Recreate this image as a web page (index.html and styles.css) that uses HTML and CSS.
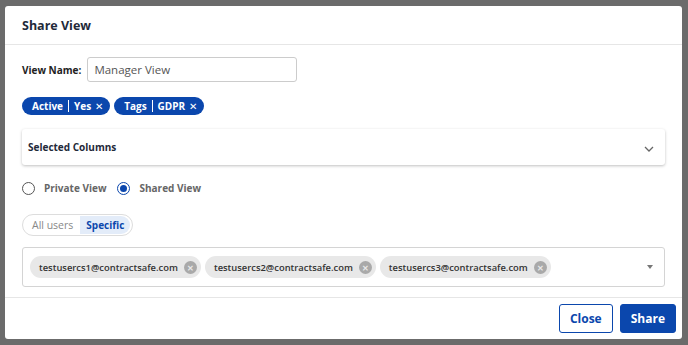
FILE: index.html
```html
<!DOCTYPE html>
<html lang="en">
<head>
    <meta charset="UTF-8">
    <meta name="viewport" content="width=device-width, initial-scale=1.0">
    <title>Share View</title>
    <link rel="stylesheet" href="styles.css">
</head>
<body>
    <div class="modal">
        <div class="modal-header">
            <h2>Share View</h2>
        </div>
        <div class="modal-body">
            <div class="name-row">
                <label for="viewName">View Name:</label>
                <input type="text" id="viewName" value="Manager View">
            </div>

            <div class="filters">
                <span class="filter">Active<i class="sep"></i>Yes<span class="x">&#x2715;</span></span>
                <span class="filter">Tags<i class="sep"></i>GDPR<span class="x">&#x2715;</span></span>
            </div>

            <div class="columns-card">
                <span>Selected Columns</span>
                <svg class="chevron" width="10" height="6" viewBox="0 0 10 6"><path d="M1 1l4 4 4-4" fill="none" stroke="#666" stroke-width="1.3"/></svg>
            </div>

            <div class="radios">
                <label class="radio"><span class="dot"></span>Private View</label>
                <label class="radio checked"><span class="dot"></span>Shared View</label>
            </div>

            <div class="segment">
                <span class="seg">All users</span>
                <span class="seg active">Specific</span>
            </div>

            <div class="users">
                <div class="chips">
                    <span class="chip">testusercs1@contractsafe.com<span class="chip-x">&#x2715;</span></span>
                    <span class="chip">testusercs2@contractsafe.com<span class="chip-x">&#x2715;</span></span>
                    <span class="chip">testusercs3@contractsafe.com<span class="chip-x">&#x2715;</span></span>
                </div>
                <span class="caret"></span>
            </div>
        </div>
        <div class="modal-footer">
            <button class="btn btn-outline">Close</button>
            <button class="btn btn-primary">Share</button>
        </div>
    </div>
</body>
</html>
```

FILE: styles.css
```css
* {
    box-sizing: border-box;
}
body {
    margin: 0;
    padding: 6px 6px 0 5px;
    background-color: #6b6b6b;
    font-family: "Open Sans", "Noto Sans", sans-serif;
    height: 345px;
    overflow: hidden;
}
.modal {
    width: 677px;
    height: 333px;
    background-color: #fff;
    border-radius: 3px;
    display: flex;
    flex-direction: column;
}
.modal-header {
    height: 39px;
    border-bottom: 1px solid #e6e6e6;
    padding: 0 17px;
    display: flex;
    align-items: center;
}
.modal-header h2 {
    margin: 0;
    font-size: 12.5px;
    font-weight: 700;
    color: #1f2a3a;
}
.modal-body {
    padding: 12px 17px 0 17px;
    flex: 1;
    border-bottom: 1px solid #e6e6e6;
}
.name-row {
    display: flex;
    align-items: center;
    height: 25px;
}
.name-row label {
    font-size: 10px;
    font-weight: 700;
    color: #222;
    margin-right: 6px;
}
.name-row input {
    width: 210px;
    height: 25px;
    border: 1px solid #ccc;
    border-radius: 3px;
    padding: 0 6px;
    font-family: inherit;
    font-size: 11.5px;
    color: #555;
    outline: none;
}
.filters {
    display: flex;
    gap: 4px;
    margin-top: 15px;
}
.filter {
    display: flex;
    align-items: center;
    height: 18px;
    padding: 0 7px 0 10px;
    border-radius: 9px;
    background-color: #0b47ad;
    color: #fff;
    font-size: 10px;
    font-weight: 700;
}
.sep {
    width: 1px;
    height: 12px;
    background-color: #fff;
    margin: 0 5px;
}
.x {
    font-size: 10px;
    font-weight: 400;
    margin-left: 4px;
}
.columns-card {
    margin-top: 14px;
    height: 36px;
    border-radius: 3px;
    box-shadow: 0 1px 3px rgba(0, 0, 0, 0.25);
    display: flex;
    align-items: center;
    justify-content: space-between;
    padding: 0 11px 0 6px;
    font-size: 10px;
    font-weight: 700;
    color: #1f2a3a;
}
.chevron {
    margin-top: 3px;
}
.radios {
    display: flex;
    gap: 11px;
    margin-top: 15px;
    height: 16px;
    align-items: center;
}
.radio {
    display: flex;
    align-items: center;
    font-size: 10px;
    font-weight: 700;
    color: #666;
}
.dot {
    width: 13px;
    height: 13px;
    border: 1.5px solid #555;
    border-radius: 50%;
    margin-right: 9px;
    display: flex;
    align-items: center;
    justify-content: center;
}
.checked .dot {
    border-color: #0b47ad;
}
.checked .dot::after {
    content: "";
    width: 7px;
    height: 7px;
    border-radius: 50%;
    background-color: #0b47ad;
}
.segment {
    display: inline-flex;
    align-items: center;
    margin-top: 18px;
    height: 22px;
    border: 1px solid #ddd;
    border-radius: 11px;
    padding: 0 2px 0 0;
}
.seg {
    font-size: 10.5px;
    color: #888;
    padding: 0 7px 0 9px;
    height: 18px;
    line-height: 18px;
}
.seg.active {
    background-color: #e3ecf9;
    color: #0b47ad;
    font-weight: 700;
    font-size: 10px;
    border-radius: 0 9px 9px 0;
    padding: 0 6px;
}
.users {
    margin-top: 11px;
    height: 40px;
    border: 1px solid #d4d4d4;
    border-radius: 3px;
    display: flex;
    align-items: center;
    justify-content: space-between;
    padding: 0 11px 0 7px;
}
.chips {
    display: flex;
    gap: 4px;
}
.chip {
    display: flex;
    align-items: center;
    height: 22px;
    border-radius: 11px;
    background-color: #e8e8e8;
    padding: 0 4px 0 9px;
    font-size: 9.4px;
    font-weight: 600;
    color: #333;
}
.chip-x {
    width: 13px;
    height: 13px;
    border-radius: 50%;
    background-color: #a9a9a9;
    color: #e8e8e8;
    font-size: 8px;
    font-weight: 700;
    line-height: 13px;
    text-align: center;
    margin-left: 6px;
}
.caret {
    width: 0;
    height: 0;
    border-left: 3.5px solid transparent;
    border-right: 3.5px solid transparent;
    border-top: 4px solid #777;
}
.modal-footer {
    height: 41px;
    display: flex;
    align-items: center;
    justify-content: flex-end;
    gap: 7px;
    padding: 0 6px 1px 0;
}
.btn {
    height: 29px;
    border-radius: 3px;
    font-family: inherit;
    font-size: 12px;
    font-weight: 700;
    padding: 0 10px;
}
.btn-outline {
    background-color: #fff;
    border: 1.5px solid #0b47ad;
    color: #0b47ad;
}
.btn-primary {
    background-color: #0b47ad;
    border: 1px solid #0b47ad;
    color: #fff;
}
```
